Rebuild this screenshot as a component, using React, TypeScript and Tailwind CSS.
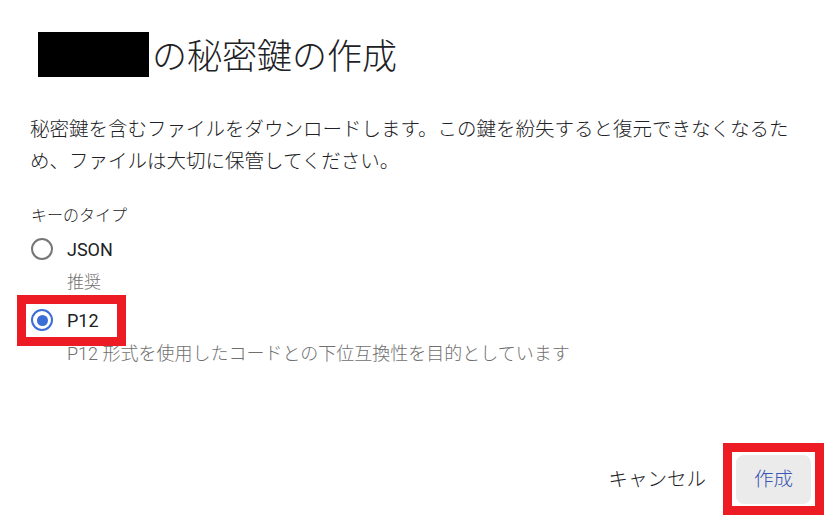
import React from 'react';

const font = "font-['Roboto','Noto_Sans_CJK_JP',sans-serif]";

function Radio({ checked }: { checked: boolean }) {
  if (checked) {
    return (
      <span className="flex h-[22px] w-[22px] items-center justify-center rounded-full border-[2.5px] border-[#3b6ed6]">
        <span className="h-[11px] w-[11px] rounded-full bg-[#3b6ed6]" />
      </span>
    );
  }
  return <span className="h-[22px] w-[22px] rounded-full border-[2.5px] border-[#767676]" />;
}

export default function App() {
  return (
    <div className={`${font} h-[528px] w-[834px] bg-white text-[#202124] flex flex-col`}>
      {/* title */}
      <div className="mt-[32px] ml-[38px] flex h-[45px] items-center">
        <span className="h-[45px] w-[111px] bg-black" />
        <span className="ml-[3px] mt-[6px] text-[35px] font-light leading-[45px]">の秘密鍵の作成</span>
      </div>

      <p className="mt-[37px] ml-[30px] w-[772px] text-[19.5px] font-light leading-[32px]">
        秘密鍵を含むファイルをダウンロードします。この鍵を紛失すると復元できなくなるため、ファイルは大切に保管してください。
      </p>

      <div className="mt-[27px] ml-[31px] text-[16px] font-light leading-[22px]">キーのタイプ</div>

      <label className="mt-[10px] ml-[31px] flex h-[24px] items-center gap-[14px]">
        <Radio checked={false} />
        <span className="text-[18px]">JSON</span>
      </label>
      <div className="mt-[10px] ml-[67px] text-[17px] font-light leading-[22px] text-[#6f6f6f]">推奨</div>

      <label className="relative mt-[15px] ml-[31px] flex h-[24px] items-center gap-[14px]">
        <span className="pointer-events-none absolute left-[-14px] top-[-13px] h-[51px] w-[109px] border-[9px] border-[#ed1c24]" />
        <Radio checked />
        <span className="text-[18px]">P12</span>
      </label>
      <div className="mt-[11px] ml-[67px] text-[18px] font-light leading-[22px] text-[#6f6f6f]">
        P12 形式を使用したコードとの下位互換性を目的としています
      </div>

      <div className="mt-[90px] mr-[23px] flex items-center justify-end gap-[30px]">
        <button className="text-[19.5px] font-light leading-[28px] text-[#202124]">キャンセル</button>
        <div className="relative">
          <span className="pointer-events-none absolute left-[-13px] top-[-12px] h-[72px] w-[101px] border-[9px] border-[#ed1c24]" />
          <button className="h-[49px] w-[75px] rounded-[8px] bg-[#ebebeb] text-[19.5px] font-light text-[#3a56b4]">作成</button>
        </div>
      </div>
    </div>
  );
}
